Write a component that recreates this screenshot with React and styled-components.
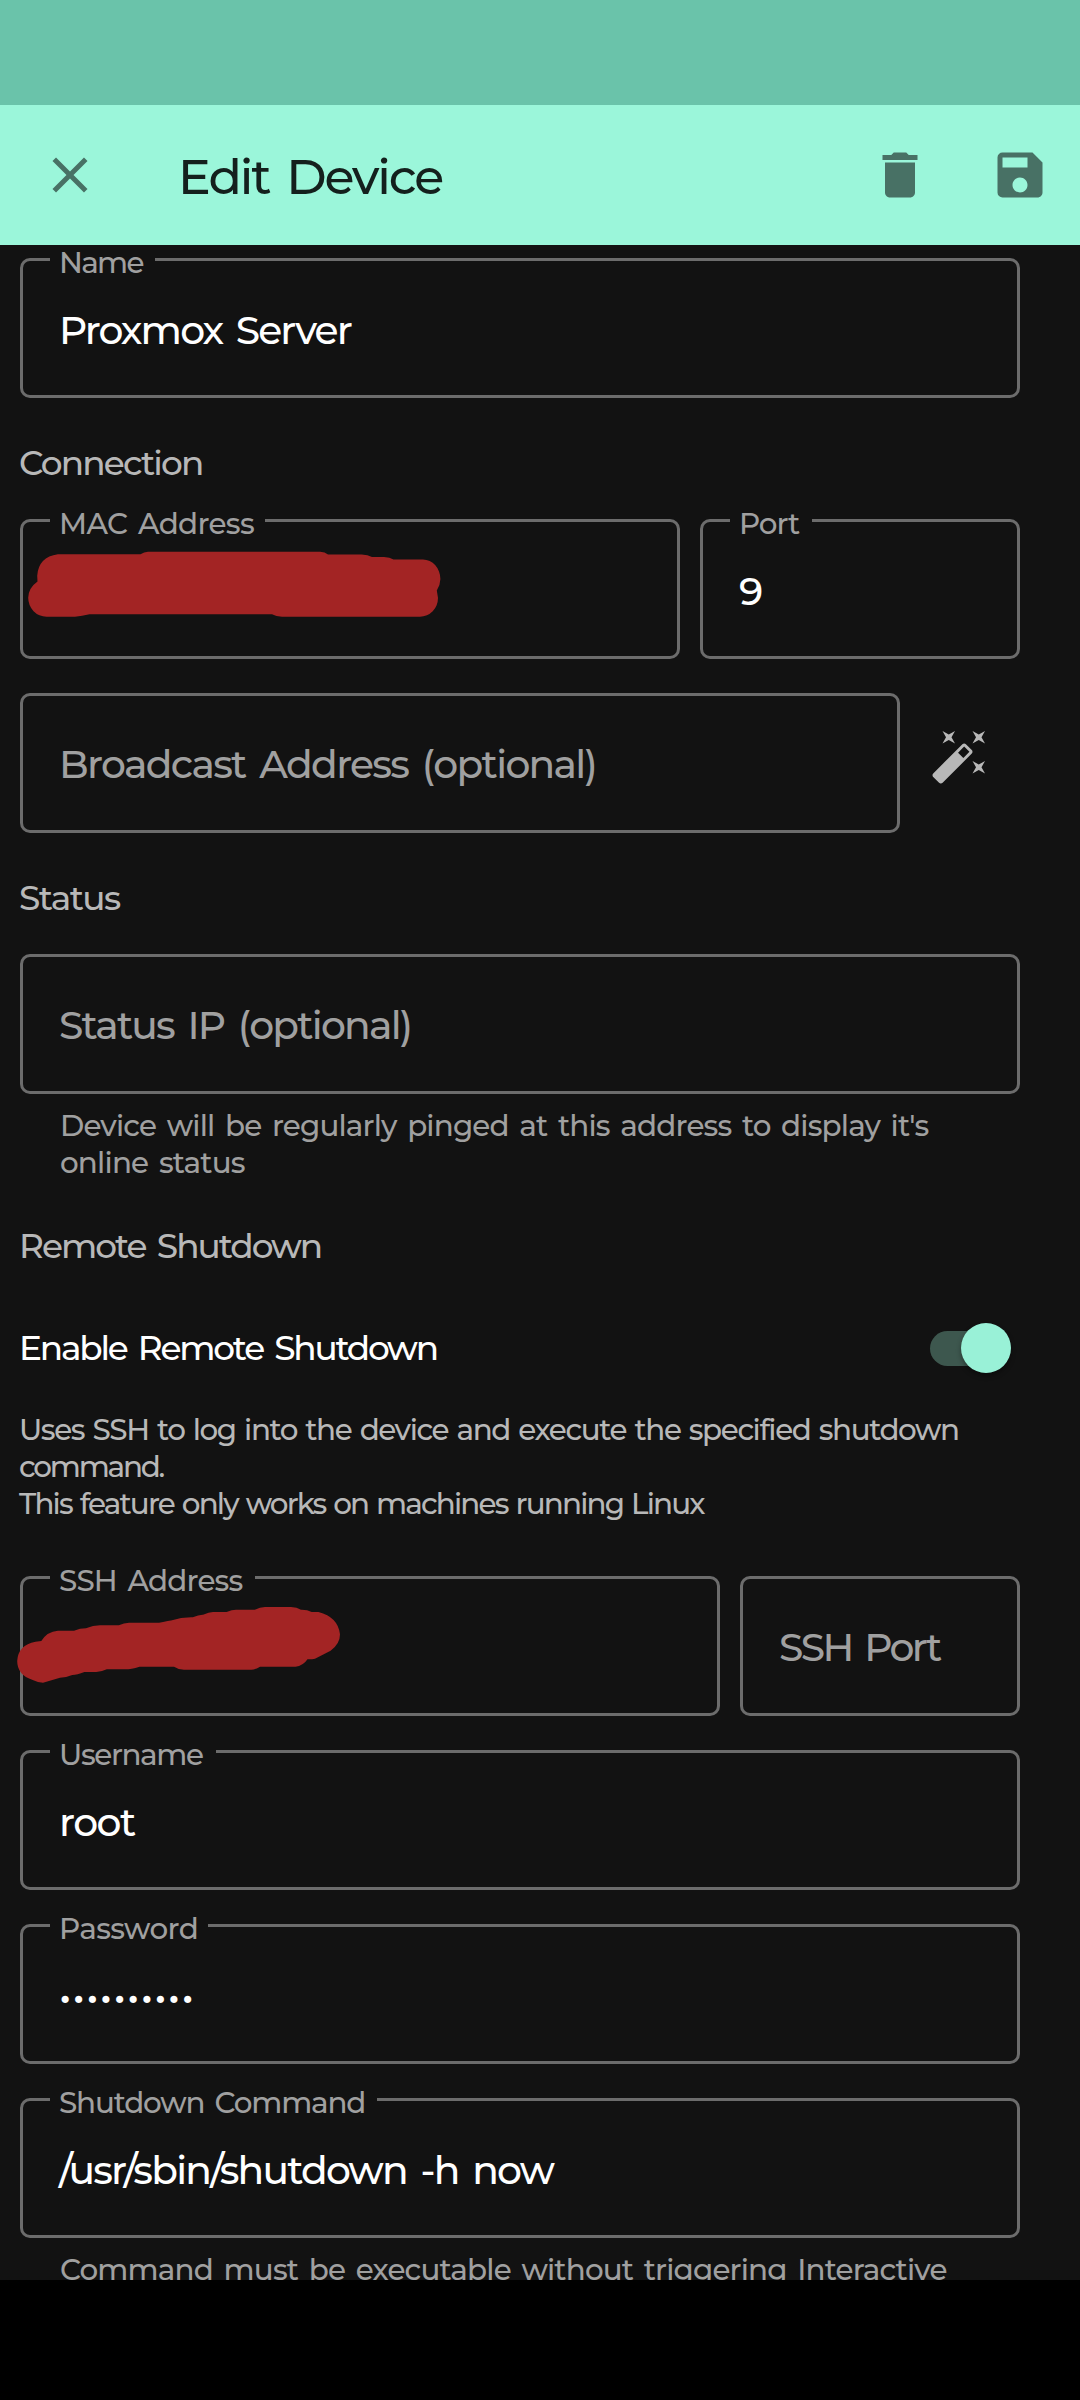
import React from 'react';
import styled, { createGlobalStyle } from 'styled-components';
import { MdClose, MdDelete, MdSave } from 'react-icons/md';

const GlobalStyle = createGlobalStyle`
  * { box-sizing: border-box; }
  body {
    margin: 0;
    background: #000;
    font-family: Montserrat, Inter, "Liberation Sans", sans-serif;
    font-weight: 500;
    font-kerning: normal;
  }
`;

const Screen = styled.div`
  width: 1080px;
  height: 2400px;
  display: flex;
  flex-direction: column;
  background: #000;
  overflow: hidden;
`;

const StatusBar = styled.div`
  flex: none;
  height: 105px;
  background: #6ac3aa;
`;

const Toolbar = styled.header`
  flex: none;
  height: 140px;
  padding: 0 30px 0 40px;
  display: flex;
  align-items: center;
  background: #9bf6da;
  color: #487165;
`;

const Title = styled.h1`
  flex: 1;
  margin: 0;
  padding: 4px 0 0 78px;
  font-size: 49px;
  font-weight: inherit;
  line-height: 60px;
  letter-spacing: -2.1px;
  word-spacing: 5.8px;
  color: #14201d;
`;

const Actions = styled.div`
  display: flex;
  gap: 60px;
`;

const IconButton = styled.button`
  display: flex;
  padding: 0;
  border: 0;
  background: none;
  color: inherit;
  font-size: 60px;
`;

const Form = styled.main`
  flex: none;
  height: 2035px;
  padding: 13px 60px 0 20px;
  overflow: hidden;
  background: #121212;
`;

const Section = styled.h2`
  margin: 44px 0 35px -1px;
  font-size: 34.3px;
  font-weight: inherit;
  line-height: 42px;
  letter-spacing: ${p => p.$ls}px;
  word-spacing: 4.1px;
  color: #b8b8b8;
`;

const Row = styled.div`
  display: flex;
  gap: 20px;
`;

const Stack = styled.div`
  display: flex;
  flex-direction: column;
  gap: 34px;
`;

const Box = styled.div`
  position: relative;
  flex: ${p => (p.$w ? 'none' : '1 1 auto')};
  width: ${p => (p.$w ? `${p.$w}px` : 'auto')};
  height: 140px;
  padding: ${p => (p.$empty ? 1 : 3)}px 37px 0 36px;
  display: flex;
  align-items: center;
  border: 3px solid #6c6c6c;
  border-radius: 10px;
  font-size: 39.2px;
  line-height: 50px;
  white-space: nowrap;
  letter-spacing: ${p => p.$ls || 0}px;
  word-spacing: 4.7px;
  color: ${p => (p.$empty ? '#a0a0a0' : '#fff')};
`;

const Label = styled.span`
  position: absolute;
  top: -13px;
  left: 27px;
  width: ${p => p.$w}px;
  padding-left: 9px;
  background: #121212;
  font-size: 29.4px;
  line-height: 30px;
  letter-spacing: ${p => p.$ls}px;
  word-spacing: 3.5px;
  color: #a0a0a0;
`;

const Helper = styled.p`
  margin: 13px 0 0;
  padding-left: 40px;
  font-size: 29.4px;
  line-height: 37px;
  white-space: nowrap;
  letter-spacing: ${p => p.$ls}px;
  word-spacing: 3.5px;
  color: #a0a0a0;
`;

const SwitchRow = styled.div`
  height: 92px;
  padding-right: 9px;
  display: flex;
  align-items: center;
  justify-content: space-between;
  font-size: 34.3px;
  letter-spacing: -2.2px;
  word-spacing: 4.1px;
  color: #fff;
`;

const SwitchLabel = styled.span`
  margin-left: -1px;
`;

const Track = styled.div`
  position: relative;
  width: 75px;
  height: 35px;
  margin-right: 6px;
  border-radius: 18px;
  background: #3d574e;
`;

const Thumb = styled.div`
  position: absolute;
  top: -7.5px;
  right: -6px;
  width: 50px;
  height: 50px;
  border-radius: 50%;
  background: #99f1d7;
  box-shadow: 0 3px 5px rgba(0, 0, 0, 0.35);
`;

const Description = styled.p`
  margin: 17px 0 54px -1px;
  font-size: 29.4px;
  line-height: 37px;
  white-space: nowrap;
  word-spacing: 1.8px;
  color: #b8b8b8;
`;

const Line = styled.span`
  display: block;
  letter-spacing: ${p => p.$ls}px;
`;

const WandButton = styled.button`
  flex: none;
  width: 100px;
  height: 126px;
  padding: 0 0 0 10px;
  display: flex;
  align-items: center;
  border: 0;
  background: none;
  color: #b8b8b8;
`;

const Scribble = styled.svg`
  position: absolute;
  left: -23px;
  top: -3px;
  width: 460px;
  height: 140px;
  fill: #a32424;
`;

const Wand = () => (
  <svg width="60" height="60" viewBox="0 0 24 24" fill="currentColor">
    <path d="M7.5,5.6L5,7L6.4,4.5L5,2L7.5,3.4L10,2L8.6,4.5L10,7L7.5,5.6M19.5,15.4L22,14L20.6,16.5L22,19L19.5,17.6L17,19L18.4,16.5L17,14L19.5,15.4M22,2L20.6,4.5L22,7L19.5,5.6L17,7L18.4,4.5L17,2L19.5,3.4L22,2M13.34,12.78L15.78,10.34L13.66,8.22L11.22,10.66L13.34,12.78M14.37,7.29L16.71,9.63C17.1,10 17.1,10.65 16.71,11.04L5.04,22.71C4.65,23.1 4,23.1 3.63,22.71L1.29,20.37C0.9,20 0.9,19.35 1.29,18.96L12.96,7.29C13.35,6.9 14,6.9 14.37,7.29Z" />
  </svg>
);

function Field({ label, notch, labelLs, placeholder, value, ls, width, children }) {
  return (
    <Box $w={width} $ls={ls} $empty={!!placeholder}>
      {label && <Label $w={notch} $ls={labelLs}>{label}</Label>}
      {value || placeholder}
      {children}
    </Box>
  );
}

export default function App() {
  return (
    <Screen>
      <GlobalStyle />
      <StatusBar />
      <Toolbar>
        <IconButton aria-label="Close"><MdClose /></IconButton>
        <Title>Edit Device</Title>
        <Actions>
          <IconButton aria-label="Delete"><MdDelete /></IconButton>
          <IconButton aria-label="Save"><MdSave /></IconButton>
        </Actions>
      </Toolbar>
      <Form>
        <Field label="Name" notch={105} labelLs={-1.7} value="Proxmox Server" ls={-1.86} />

        <Section $ls={-1.85}>Connection</Section>
        <Stack>
          <Row>
            <Field label="MAC Address" notch={215} labelLs={-0.66}>
              <Scribble viewBox="0 519 460 140">
                <path d="M57.9 554.3H140.5Q144 551.7 148 551.7H320.2Q325 552 328 554.5H361.6Q368 554.8 372 557H384Q390 557.2 393.5 559.5H423A17.8 19.5 0 0 1 440.4 579Q440.3 585 436.8 590.5L438 598A18 18.7 0 0 1 420 616.7H282Q276 616.5 272 614.2H89.5Q82 616 75 616.7H46.5A18.3 19 0 0 1 28.2 597.7Q28.4 588 37.5 581.5L37.2 575.7Q38.5 557 57.9 554.3Z" />
              </Scribble>
            </Field>
            <Field label="Port" notch={82} labelLs={-1} value="9" width={320} />
          </Row>
          <Row>
            <Field placeholder="Broadcast Address (optional)" ls={-1.68} />
            <WandButton aria-label="Detect broadcast address"><Wand /></WandButton>
          </Row>
        </Stack>

        <Section $ls={-1.55}>Status</Section>
        <Field placeholder="Status IP (optional)" ls={-1.77} />
        <Helper $ls={-0.83}>
          Device will be regularly pinged at this address to display it's
          <Line $ls={-0.8}>online status</Line>
        </Helper>

        <Section $ls={-2}>Remote Shutdown</Section>
        <SwitchRow>
          <SwitchLabel>Enable Remote Shutdown</SwitchLabel>
          <Track><Thumb /></Track>
        </SwitchRow>
        <Description>
          <Line $ls={-1.39}>Uses SSH to log into the device and execute the specified shutdown</Line>
          <Line $ls={-2.2}>command.</Line>
          <Line $ls={-1.83}>This feature only works on machines running Linux</Line>
        </Description>
        <Stack>
          <Row>
            <Field label="SSH Address" notch={205} labelLs={-0.82}>
              <Scribble viewBox="0 1576 460 140">
                <path d="M35.5 1641.7L41.3 1641Q47 1631.5 57.9 1630.7H74Q80 1628.3 86 1628.3Q93 1625.3 100 1625.3H118.8Q124 1622.7 129 1622.7H159Q168 1621 171 1620.5Q182 1617 192.8 1617.3Q199 1614.5 203 1614.7Q209 1612 213 1612H226.6Q232 1609.7 236 1609.7H254.8Q260 1607 265 1607H291Q297 1607.3 301 1609.7Q307 1609.5 311.7 1612H318.5Q338 1617 340 1634.3Q340 1644 330.6 1650.7L315 1658.7Q312 1659.4 307.5 1659.3Q303 1666 295.5 1666.7H260Q255 1669.7 251.4 1669.7H184Q178 1669.5 174 1666.7H139.5Q131 1669.3 125.7 1669.3H106.8Q101 1672 96.4 1672H84.4Q77 1675 72.3 1675Q66 1677.7 60 1677.7L43 1682.7Q38 1682.5 32.7 1680Q17.2 1675 17.2 1661Q18 1645 35.5 1641.7Z" />
              </Scribble>
            </Field>
            <Field placeholder="SSH Port" ls={-2.6} width={280} />
          </Row>
          <Field label="Username" notch={166} labelLs={-1.35} value="root" ls={-1.45} />
          <Field label="Password" notch={158} labelLs={-0.6} value="••••••••••" ls={1.3} />
          <Field label="Shutdown Command" notch={327} labelLs={-1.15} value="/usr/sbin/shutdown -h now" ls={-1.75} />
        </Stack>
        <Helper $ls={-0.82}>Command must be executable without triggering Interactive</Helper>
      </Form>
    </Screen>
  );
}
